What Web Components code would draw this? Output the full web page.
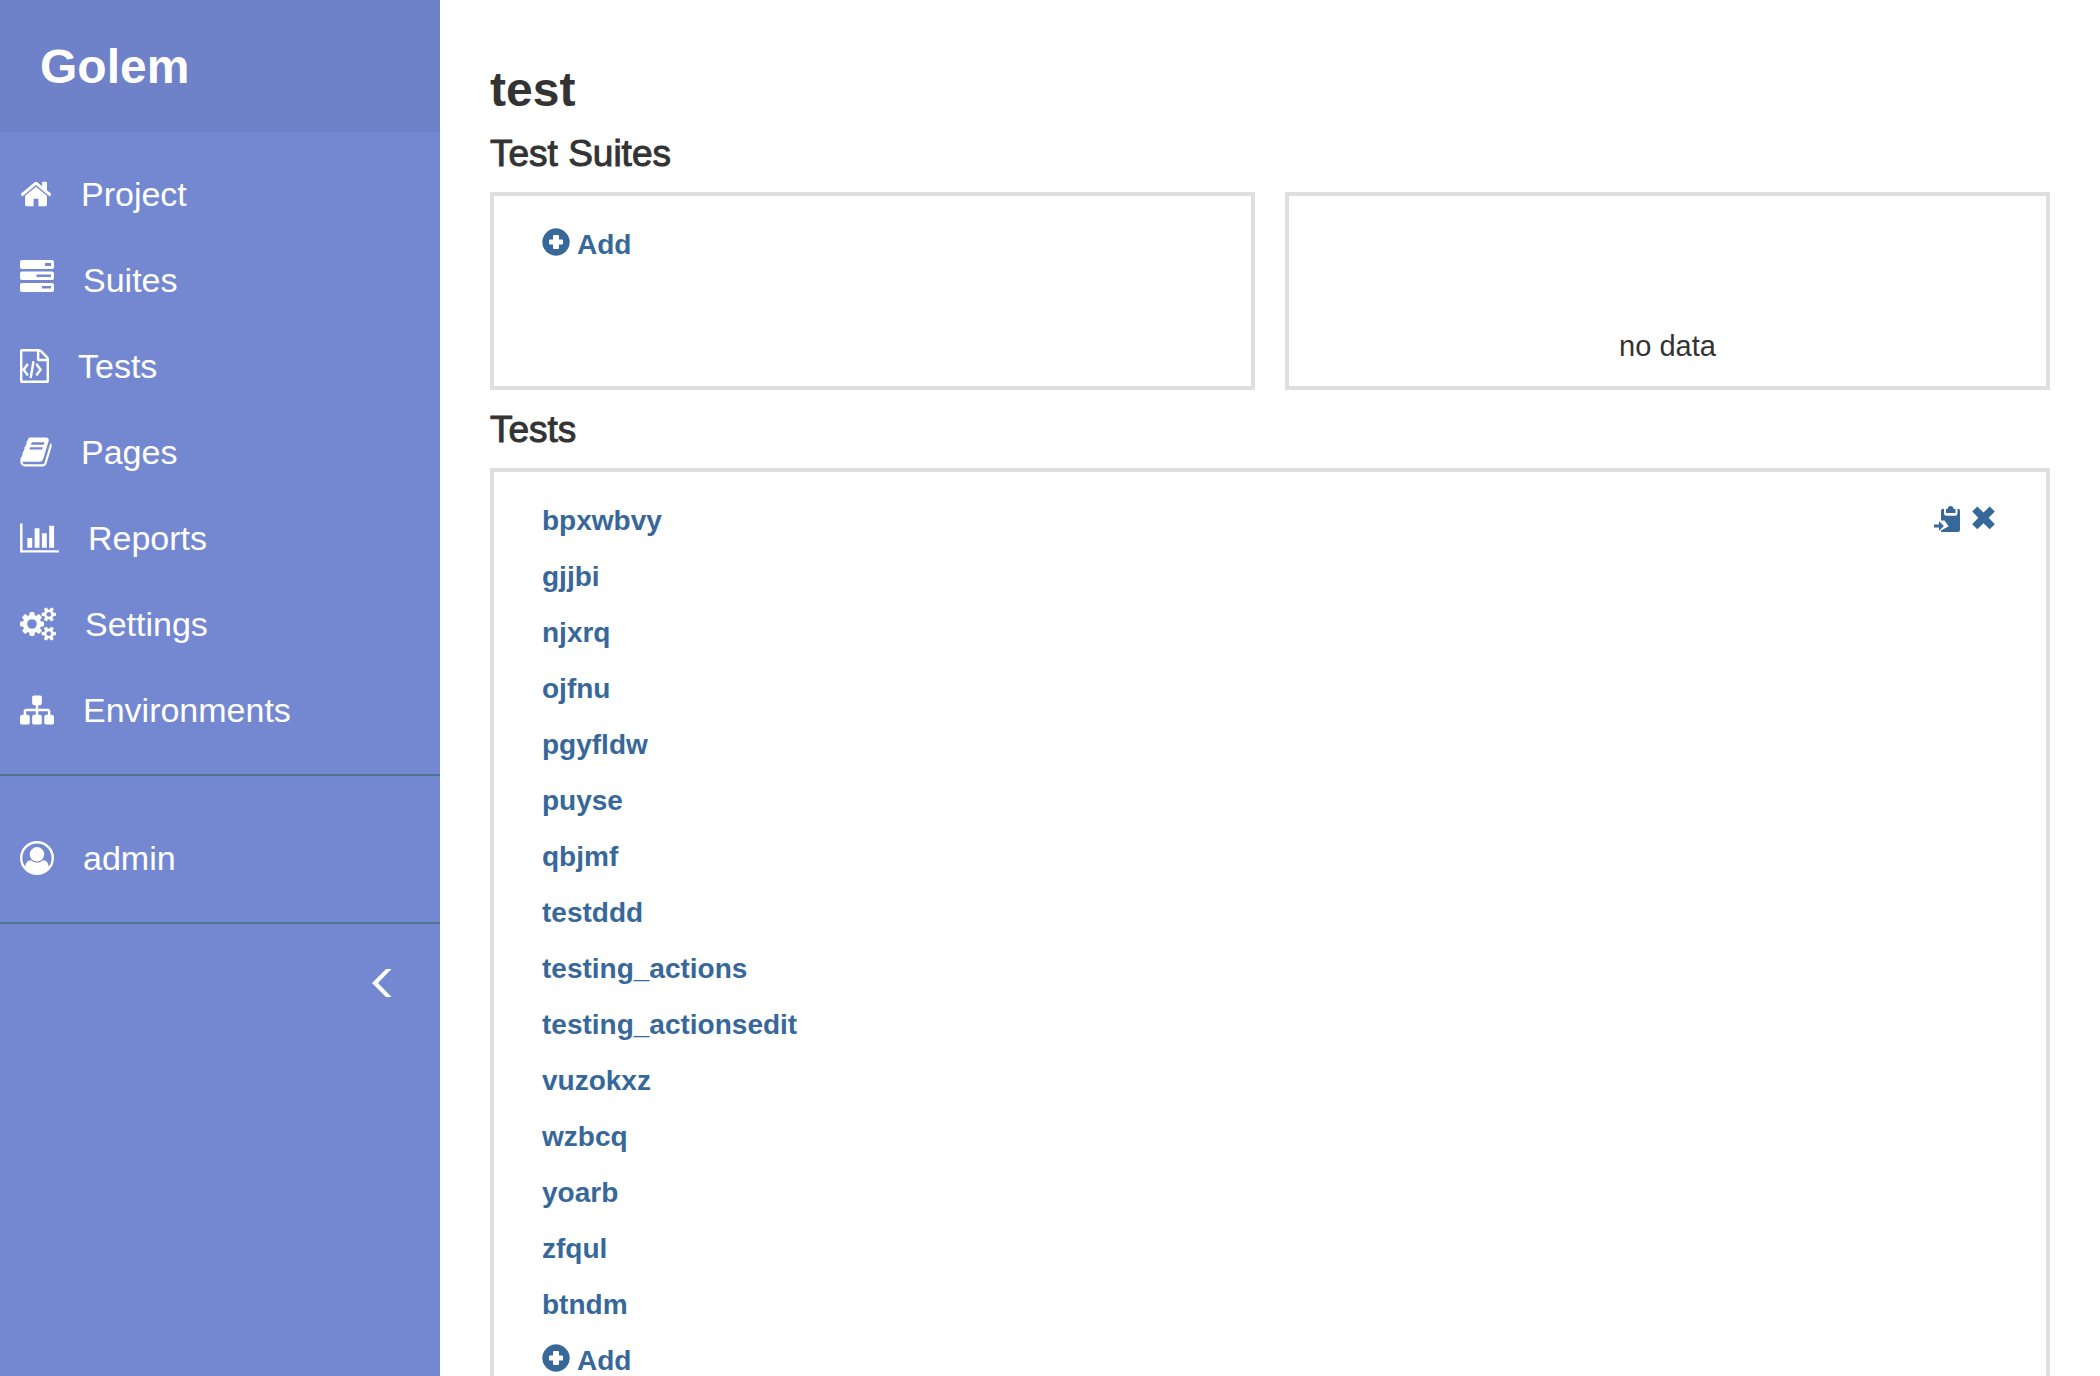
<!DOCTYPE html>
<html lang="en">
<head>
<meta charset="utf-8">
<meta name="viewport" content="width=device-width, initial-scale=1">
<title>Golem - test</title>
<style>
  html { scrollbar-width: none; }
  body {
    margin: 0;
    background: #fff;
    color: #333;
    font-family: "Liberation Sans", Arial, sans-serif;
    --side: #7488d1;
    --side-head: #6f81c8;
    --side-line: #4a758c;
    --link: #376899;
    --border: #dfdfdf;
  }
</style>
</head>
<body>
<golem-app>
  <golem-sidebar slot="side">
    <nav-item icon="home">Project</nav-item>
    <nav-item icon="tasks">Suites</nav-item>
    <nav-item icon="code">Tests</nav-item>
    <nav-item icon="book">Pages</nav-item>
    <nav-item icon="chart">Reports</nav-item>
    <nav-item icon="cogs">Settings</nav-item>
    <nav-item icon="sitemap">Environments</nav-item>
    <nav-item slot="user" icon="user">admin</nav-item>
  </golem-sidebar>
  <project-view name="test"></project-view>
</golem-app>

<script>
const smallCog = 'v140q0 16-149 31-12 27-30 52 51 113 51 138 0 4-4 7-122 71-124 71-8 0-46-47t-52-68q-20 2-30 2t-30-2q-14 21-52 68t-46 47q-2 0-124-71-4-3-4-7 0-25 51-138-18-25-30-52-149-15-149-31v-140q0-16 149-31 13-29 30-52-51-113-51-138 0-4 4-7 4-2 35-20t59-34 30-16q8 0 46 46.5t52 67.5q20-2 30-2t30 2q51-71 92-112l6-2q4 0 124 70 4 3 4 7 0 25-51 138 17 23 30 52 149 15 149 31z';

// name: [width, height, viewBox, markup]
const ICONS = {
  home: [32, 34, '64 0 1664 1792', '<path d="M1472 992v480q0 26-19 45t-45 19h-384v-384h-256v384h-384q-26 0-45-19t-19-45v-480q0-1 .5-3t.5-3l575-474 575 474q1 2 1 6zm223-69l-62 74q-8 9-21 11h-3q-13 0-21-7l-692-577-692 577q-12 8-24 7-13-2-21-11l-62-74q-8-10-7-23.5t11-21.5l719-599q32-26 76-26t76 26l244 204v-195q0-14 9-23t23-9h192q14 0 23 9t9 23v408l219 182q10 8 11 21.5t-7 23.5z"/>'],
  tasks: [34, 34, '0 0 34 34', '<path fill-rule="evenodd" d="M2 -3H32A2 2 0 0 1 34 -1V4A2 2 0 0 1 32 6H2A2 2 0 0 1 0 4V-1A2 2 0 0 1 2 -3ZM25 0V3H31V0ZM2 8.500H32A2 2 0 0 1 34 10.500V15A2 2 0 0 1 32 17H2A2 2 0 0 1 0 15V10.500A2 2 0 0 1 2 8.500ZM16.500 11.500V14H31V11.500ZM2 20H32A2 2 0 0 1 34 22V27A2 2 0 0 1 32 29H2A2 2 0 0 1 0 27V22A2 2 0 0 1 2 20ZM22 23V25.500H31V23Z"/>'],
  code: [29, 34, '128 0 1536 1792', '<path d="M1596 380q28 28 48 76t20 88v1152q0 40-28 68t-68 28h-1344q-40 0-68-28t-28-68v-1600q0-40 28-68t68-28h896q40 0 88 20t76 48zm-444-244v376h376q-10-29-22-41l-313-313q-12-12-41-22zm384 1528v-1024h-416q-40 0-68-28t-28-68v-416h-768v1536h1280zm-1056-896q8-11 21-12.5t24 6.5l51 38q11 8 12.500 21t-6.500 24l-182 243 182 243q8 11 6.500 24t-12.500 21l-51 38q-11 8-24 6.500t-21-12.500l-226-301q-14-19 0-38zm802 301q14 19 0 38l-226 301q-8 11-21 12.500t-24-6.500l-51-38q-11-8-12.500-21t6.500-24l182-243-182-243q-8-11-6.500-24t12.500-21l51-38q11-8 24-6.500t21 12.500zm-620 461q-13-2-20.500-13t-5.500-24l138-831q2-13 13-20.500t24-5.500l63 10q13 2 20.500 13t5.500 24l-138 831q-2 13-13 20.500t-24 5.500z"/>'],
  book: [32, 34, '64 0 1664 1792', '<path d="M1703 478q40 57 18 129l-275 906q-19 64-76.5 107.500t-122.500 43.500h-923q-77 0-148.500-53.500t-99.500-131.500q-24-67-2-127 0-4 3-27t4-37q1-8-3-21.500t-3-19.500q2-11 8-21t16.500-23.500 16.500-23.500q23-38 45-91.500t30-91.500q3-10 .5-30t-.5-28q3-11 17-28t17-23q21-36 42-92t25-90q1-9-2.500-32t.5-28q4-13 22-30.500t22-22.500q19-26 42.500-84.500t27.500-96.500q1-8-3-25.500t-2-26.500q2-8 9-18t18-23 17-21q8-12 16.500-30.500t15-35 16-36 19.500-32 26.500-23.500 36-11.500 47.500 5.500l-1 3q38-9 51-9h761q74 0 114 56t18 130l-274 906q-36 119-71.500 153.500t-128.500 34.500h-869q-27 0-38 15-11 16-1 43 24 70 144 70h923q29 0 56-15.500t35-41.500l300-987q7-22 5-57 38 15 59 43zm-1064 2q-4 13 2 22.500t20 9.500h608q13 0 25.500-9.500t16.500-22.500l21-64q4-13-2-22.500t-20-9.500h-608q-13 0-25.500 9.500t-16.500 22.500zm-83 256q-4 13 2 22.500t20 9.500h608q13 0 25.500-9.500t16.500-22.500l21-64q4-13-2-22.500t-20-9.500h-608q-13 0-25.500 9.500t-16.500 22.500z"/>'],
  chart: [39, 34, '0 0 2048 1792', '<path d="M640 896v512h-256v-512h256zm384-512v1024h-256v-1024h256zm1024 1152v128h-2048v-1536h128v1408h1920zm-640-896v768h-256v-768h256zm384-384v1152h-256v-1152h256z"/>'],
  cogs: [36, 34, '-64 0 1920 1792', '<path d="M832 896q0-106-75-181t-181-75-181 75-75 181 75 181 181 75 181-75 75-181zm768 512q0-52-38-90t-90-38-90 38-38 90q0 53 37.500 90.500t90.500 37.500 90.500-37.500 37.500-90.500zm0-1024q0-52-38-90t-90-38-90 38-38 90q0 53 37.500 90.500t90.500 37.500 90.500-37.500 37.500-90.500zm-384 421v185q0 10-7 19.500t-16 10.500l-155 24q-11 35-32 76 34 48 90 115 7 11 7 20 0 12-7 19-23 30-82.500 89.500t-78.500 59.500q-11 0-21-7l-115-90q-37 19-77 31-11 108-23 155-7 24-30 24h-186q-11 0-20-7.500t-10-17.500l-23-153q-34-10-75-31l-118 89q-7 7-20 7-11 0-21-8-144-133-144-160 0-9 7-19 10-14 41-53t47-61q-23-44-35-82l-152-24q-10-1-17-9.500t-7-19.500v-185q0-10 7-19.500t16-10.500l155-24q11-35 32-76-34-48-90-115-7-11-7-20 0-12 7-20 22-30 82-89t79-59q11 0 21 7l115 90q34-18 77-32 11-108 23-154 7-24 30-24h186q11 0 20 7.500t10 17.500l23 153q34 10 75 31l118-89q8-7 20-7 11 0 21 8 144 133 144 160 0 8-7 19-12 16-42 54t-45 60q23 48 34 82l152 23q10 2 17 10.500t7 19.500zM1856 1338' + smallCog + 'M1856 314' + smallCog + '"/>'],
  sitemap: [34, 34, '0 0 1792 1792', '<path d="M1792 1248v320q0 40-28 68t-68 28h-320q-40 0-68-28t-28-68v-320q0-40 28-68t68-28h96v-192h-512v192h96q40 0 68 28t28 68v320q0 40-28 68t-68 28h-320q-40 0-68-28t-28-68v-320q0-40 28-68t68-28h96v-192h-512v192h96q40 0 68 28t28 68v320q0 40-28 68t-68 28h-320q-40 0-68-28t-28-68v-320q0-40 28-68t68-28h96v-192q0-52 38-90t90-38h512v-192h-96q-40 0-68-28t-28-68v-320q0-40 28-68t68-28h320q40 0 68 28t28 68v320q0 40-28 68t-68 28h-96v192h512q52 0 90 38t38 90v192h96q40 0 68 28t28 68z"/>'],
  user: [34, 34, '0 0 34 34', '<circle cx="17" cy="17" r="15.800" fill="none" stroke="currentColor" stroke-width="2.400"/><circle cx="17" cy="13.300" r="7.200"/><path d="M5 26.500C5.500 22 7.500 19.200 11 19.200C14.500 22.300 19.500 22.300 23 19.200C26.500 19.200 28.500 22 29 26.500A15.500 15.500 0 0 1 5 26.500Z"/>'],
  chevron: [20, 28, '0 0 20 28', '<path d="M0 14L14 0H19.500L6 14L19.500 28H14Z"/>'],
  plus: [28, 28, '0 0 28 28', '<path fill-rule="evenodd" d="M14 .300A13.700 13.700 0 1 1 13.990 .300ZM12 7Q11 7 11 8V11.400H8Q7 11.400 7 12.400V15.600Q7 16.600 8 16.600H11V20Q11 21 12 21H16Q17 21 17 20V16.600H20Q21 16.600 21 15.600V12.400Q21 11.400 20 11.400H17V8Q17 7 16 7Z"/>'],
  copy: [26, 26, '0 0 26 26', '<path d="M9.500 2.800H10V7.500Q10 9.700 12.500 9.700H21Q23.500 9.700 23.500 7.500V2.800H24Q26 2.800 26 4.800V24Q26 26 24 26H7V24.500L14.700 20.300L10.500 14.500H7V4.800Q7 2.800 9.500 2.800Z"/><path d="M12 3H13.500Q14 0 16.600 0Q19.200 0 19.700 3H21.500V7H12Z"/><path d="M0 18.500H5V15L9.800 20L5 25V21.600H0Z"/>'],
  remove: [23, 24, '0 0 23 24', '<path d="M5.300 .500L11.500 6.500L17.700 .500L22.800 5.500L16.700 11.800L22.800 18.200L17.700 23.300L11.500 17.200L5.300 23.300L.200 18.200L6.300 11.800L.200 5.500Z"/>']
};

function define(name, render) {
  customElements.define(name, class extends HTMLElement {
    constructor() { super(); this.attachShadow({ mode: 'open' }); }
    connectedCallback() { this.shadowRoot.innerHTML = render(this); }
  });
}

define('ui-icon', el => {
  const [w, h, box, body] = ICONS[el.getAttribute('name')];
  return `<style>:host{display:block;flex:none} svg{display:block;fill:currentColor;overflow:visible}</style>
    <svg width="${w}" height="${h}" viewBox="${box}" aria-hidden="true">${body}</svg>`;
});

define('golem-app', () => `
  <style>
    :host { display: flex; min-height: 100vh; }
    ::slotted([slot="side"]) { flex: none; width: 440px; }
    main { flex: 1; min-width: 0; padding: 63px 50px 50px; }
  </style>
  <slot name="side"></slot>
  <main><slot></slot></main>`);

define('golem-sidebar', () => `
  <style>
    :host { display: block; background: var(--side); color: #fff; }
    header { background: var(--side-head); padding: 37px 40px 35px; font-size: 48px; line-height: 60px; font-weight: 700; }
    a { color: inherit; text-decoration: none; }
    nav { padding: 19px 0 21px; border-bottom: 2px solid var(--side-line); }
    .user { padding-top: 39px; }
    footer { display: flex; justify-content: flex-end; padding: 45px 48px; }
    button { border: 0; padding: 0; background: none; color: inherit; cursor: pointer; }
  </style>
  <header><a href="#">Golem</a></header>
  <nav aria-label="Project"><slot></slot></nav>
  <nav aria-label="User" class="user"><slot name="user"></slot></nav>
  <footer><button type="button" aria-label="Collapse"><ui-icon name="chevron"></ui-icon></button></footer>`);

define('nav-item', el => `
  <style>
    :host { display: block; }
    a { display: flex; align-items: center; gap: 29px; padding: 20px; color: inherit;
        font-size: 34px; line-height: 46px; text-decoration: none; }
  </style>
  <a href="#"><ui-icon name="${el.getAttribute('icon')}"></ui-icon><slot></slot></a>`);

define('ui-panel', () => `
  <style>
    :host { display: flex; flex-direction: column; box-sizing: border-box; min-height: 198px;
            border: 4px solid var(--border); padding: 28px 48px; }
    :host([chart]) { justify-content: flex-end; align-items: center; padding: 20px; font-size: 29px; line-height: 40px; }
  </style>
  <slot></slot>`);

define('test-row', el => `
  <style>
    :host { display: flex; justify-content: space-between; align-items: flex-start; height: 40px; }
    a { color: var(--link); font-size: 28px; line-height: 42px; font-weight: 700; text-decoration: none; }
    .actions { display: flex; align-items: flex-start; gap: 12px; padding: 6px 3px 0 0; }
    button { border: 0; padding: 0; background: none; color: var(--link); cursor: pointer; }
  </style>
  <a href="#"><slot></slot></a>
  ${el.hasAttribute('active') ? `<div class="actions">
    <button type="button" aria-label="Duplicate"><ui-icon name="copy"></ui-icon></button>
    <button type="button" aria-label="Delete"><ui-icon name="remove"></ui-icon></button></div>` : ''}`);

define('add-button', () => `
  <style>
    :host { display: flex; height: 40px; }
    button { display: flex; align-items: flex-start; gap: 7px; border: 0; padding: 0; background: none; cursor: pointer;
             color: var(--link); font: 700 28px/42px "Liberation Sans", Arial, sans-serif; }
    ui-icon { padding-top: 4px; }
  </style>
  <button type="button"><ui-icon name="plus"></ui-icon><slot>Add</slot></button>`);

const TESTS = ['bpxwbvy', 'gjjbi', 'njxrq', 'ojfnu', 'pgyfldw', 'puyse', 'qbjmf', 'testddd', 'testing_actions',
  'testing_actionsedit', 'vuzokxz', 'wzbcq', 'yoarb', 'zfqul', 'btndm'];

define('project-view', el => `
  <style>
    :host { display: block; }
    h1, h2 { margin: 0; }
    h1 { font-size: 48px; line-height: 54px; padding-bottom: 16px; }
    h2 { font-size: 37px; line-height: 42px; margin-bottom: 17px; font-weight: 400; -webkit-text-stroke: 1px; }
    .suites { display: grid; grid-template-columns: 1fr 1fr; gap: 30px; margin-bottom: 19px; }
    .tests { gap: 16px; }
  </style>
  <h1>${el.getAttribute('name')}</h1>
  <h2>Test Suites</h2>
  <div class="suites">
    <ui-panel><add-button></add-button></ui-panel>
    <ui-panel chart>no data</ui-panel>
  </div>
  <h2>Tests</h2>
  <ui-panel class="tests">
    ${TESTS.map((t, i) => `<test-row${i ? '' : ' active'}>${t}</test-row>`).join('')}
    <add-button></add-button>
  </ui-panel>`);
</script>
</body>
</html>
